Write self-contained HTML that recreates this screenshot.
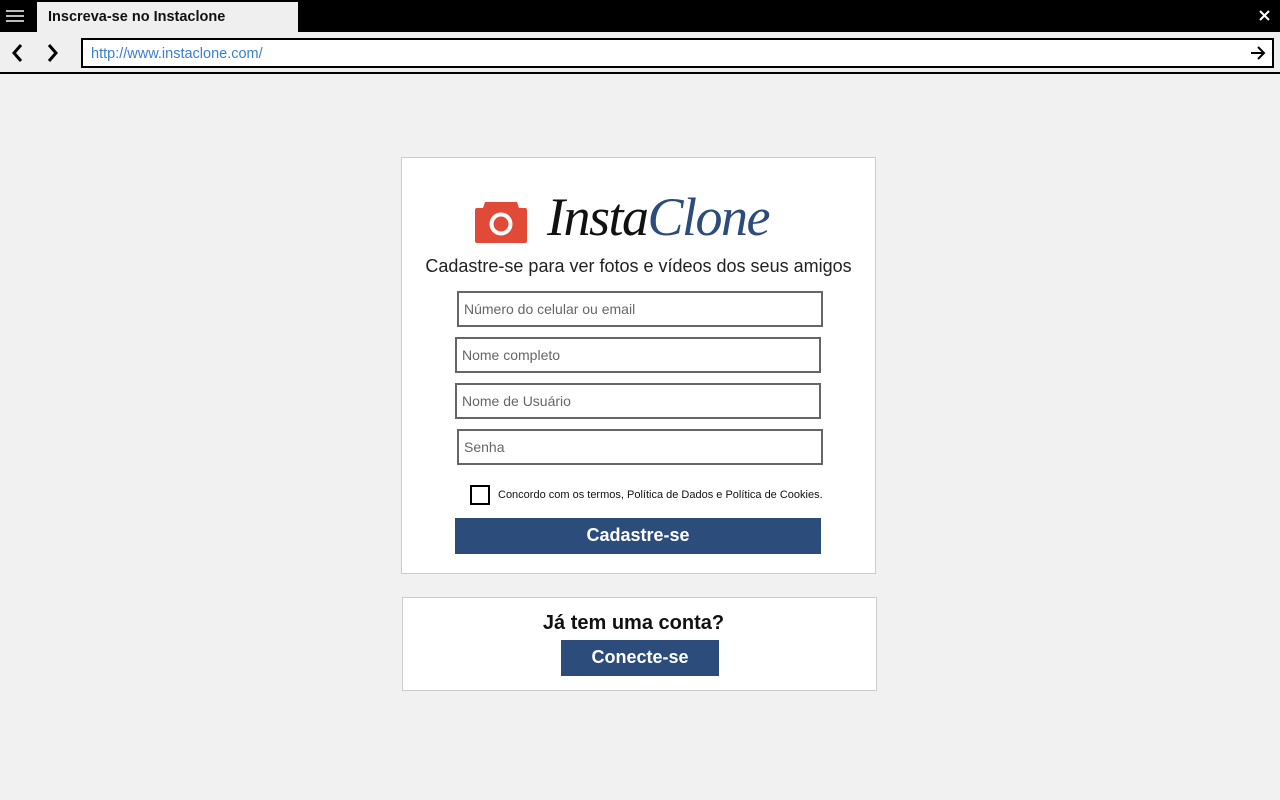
<!DOCTYPE html>
<html><head><meta charset="utf-8"><style>
*{margin:0;padding:0;box-sizing:border-box}
body{width:1280px;height:800px;background:#f1f1f1;font-family:"Liberation Sans",Arial,sans-serif;position:relative;overflow:hidden}
.top{position:absolute;left:0;top:0;width:1280px;height:32px;background:#000}
.tab{position:absolute;left:37px;top:2px;width:261px;height:30px;background:#efefef;font-size:14.5px;font-weight:bold;color:#111;padding:7px 0 0 11px}
.nav{position:absolute;left:0;top:32px;width:1280px;height:42px;background:#efefef;border-bottom:2px solid #000}
.url{position:absolute;left:81px;top:6px;width:1193px;height:30px;background:#fff;border:2px solid #000;font-size:14.5px;color:#3a7fd0;padding:6px 0 0 8px}
.card{position:absolute;background:#fff;border:1px solid #ccc}
.inp{position:absolute;width:366px;height:36px;border:2px solid #666;background:#fff;font-size:14px;color:#666;padding:8px 0 0 5px}
.btn{position:absolute;background:#2c4c7c;color:#fff;font-weight:bold;text-align:center}
</style></head><body>
<div class="top">
<svg style="position:absolute;left:6px;top:9px" width="18" height="14"><path d="M0 2h18M0 7h18M0 12h18" stroke="#bbb" stroke-width="2"/></svg>
<div class="tab">Inscreva-se no Instaclone</div>
<svg style="position:absolute;left:1259px;top:10px" width="11" height="11"><path d="M1 1L10 10M10 1L1 10" stroke="#fff" stroke-width="2"/></svg>
</div>
<div class="nav">
<svg style="position:absolute;left:11px;top:11px" width="12" height="20"><path d="M10 2L3 10L10 18" fill="none" stroke="#000" stroke-width="3"/></svg>
<svg style="position:absolute;left:47px;top:11px" width="12" height="20"><path d="M2 2L9 10L2 18" fill="none" stroke="#000" stroke-width="3"/></svg>
<div class="url">http://www.instaclone.com/
<svg style="position:absolute;right:6px;top:5px" width="16" height="16"><path d="M1 8H14M8 2L14 8L8 14" fill="none" stroke="#000" stroke-width="2"/></svg></div>
</div>
<div class="card" style="left:401px;top:157px;width:475px;height:417px">
<svg style="position:absolute;left:73px;top:41px" width="52" height="46"><path d="M10 3h32l2 6h6a2 2 0 0 1 2 2v31a2 2 0 0 1-2 2H2a2 2 0 0 1-2-2V11a2 2 0 0 1 2-2h6z" fill="#e04a36"/><circle cx="26" cy="25" r="9.5" fill="none" stroke="#fff" stroke-width="4"/></svg>
<div style="position:absolute;left:145px;top:28px;font-family:'Liberation Serif',serif;font-style:italic;font-size:54px;letter-spacing:-1.5px;white-space:nowrap"><span style="color:#111">Insta</span><span style="color:#2c4c7c">Clone</span></div>
<div style="position:absolute;left:0;width:473px;top:98px;text-align:center;font-size:18px;color:#222">Cadastre-se para ver fotos e vídeos dos seus amigos</div>
<div class="inp" style="left:55px;top:133px">Número do celular ou email</div>
<div class="inp" style="left:53px;top:179px">Nome completo</div>
<div class="inp" style="left:53px;top:225px">Nome de Usuário</div>
<div class="inp" style="left:55px;top:271px">Senha</div>
<div style="position:absolute;left:68px;top:327px;width:20px;height:20px;border:2px solid #000"></div>
<div style="position:absolute;left:96px;top:331px;font-size:11px;color:#111;white-space:nowrap">Concordo com os termos, Política de Dados e Política de Cookies.</div>
<div class="btn" style="left:53px;top:360px;width:366px;height:36px;font-size:18px;padding-top:7px">Cadastre-se</div>
</div>
<div class="card" style="left:402px;top:597px;width:475px;height:94px">
<div style="position:absolute;left:0;width:461px;top:14px;text-align:center;font-size:20px;font-weight:bold;color:#111">Já tem uma conta?</div>
<div class="btn" style="left:158px;top:42px;width:158px;height:36px;font-size:18px;padding-top:7px">Conecte-se</div>
</div>
</body></html>
